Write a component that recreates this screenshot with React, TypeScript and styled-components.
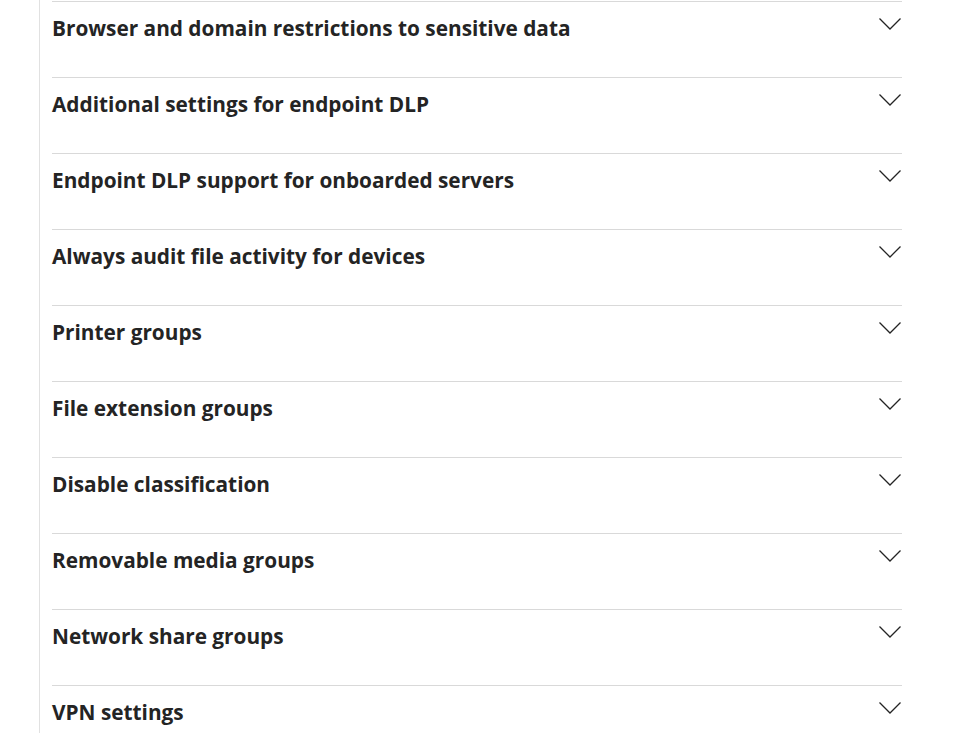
import React from "react";
import styled, { createGlobalStyle } from "styled-components";

const GlobalStyle = createGlobalStyle`
  html, body {
    margin: 0;
    padding: 0;
    background: #ffffff;
  }
  body {
    font-family: "Open Sans", "Noto Sans", "Liberation Sans", sans-serif;
    color: #242424;
  }
`;

const sections = [
  "Browser and domain restrictions to sensitive data",
  "Additional settings for endpoint DLP",
  "Endpoint DLP support for onboarded servers",
  "Always audit file activity for devices",
  "Printer groups",
  "File extension groups",
  "Disable classification",
  "Removable media groups",
  "Network share groups",
  "VPN settings",
];

const Page = styled.div`
  margin-left: 39px;
  border-left: 1px solid #e1e1e1;
  padding-left: 12px;
  padding-top: 1px;
  min-height: 733px;
  box-sizing: border-box;
`;

const List = styled.div`
  width: 850px;
  display: flex;
  flex-direction: column;
`;

const Row = styled.div`
  height: 76px;
  box-sizing: border-box;
  border-top: 1px solid #d9d9d9;
  display: flex;
  align-items: flex-start;
  justify-content: space-between;
`;

const Title = styled.h3`
  margin: 0;
  padding-top: 12px;
  font-size: 20.8px;
  line-height: 28px;
  font-weight: 700;
  letter-spacing: 0;
  color: #242424;
`;

const Chevron = styled.svg`
  margin-top: 15px;
  flex: none;
`;

function ChevronDown() {
  return (
    <Chevron width="24" height="14" viewBox="0 0 24 14" fill="none">
      <path d="M1.5 1.5 L12 12 L22.5 1.5" stroke="#242424" strokeWidth="1.3" />
    </Chevron>
  );
}

export default function App() {
  return (
    <>
      <GlobalStyle />
      <Page>
        <List>
          {sections.map((s) => (
            <Row key={s}>
              <Title>{s}</Title>
              <ChevronDown />
            </Row>
          ))}
        </List>
      </Page>
    </>
  );
}
